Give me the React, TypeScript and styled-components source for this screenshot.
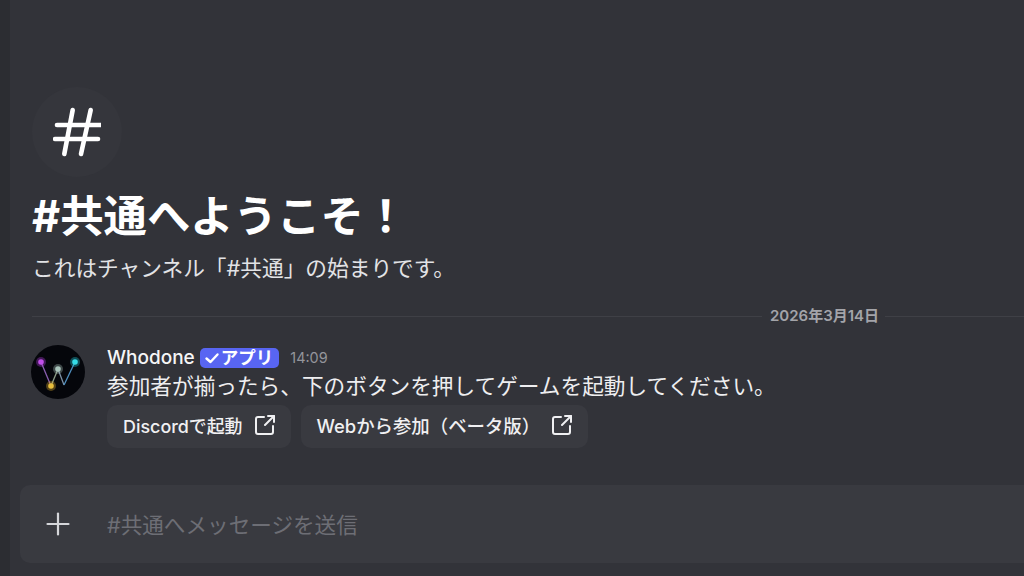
import React from "react";
import styled, { createGlobalStyle } from "styled-components";

const FONT = `Inter, "Noto Sans CJK JP", "Noto Sans", sans-serif`;

const Global = createGlobalStyle`
  html, body { margin: 0; padding: 0; background: #323339; }
  body { width: 1024px; height: 576px; overflow: hidden; font-family: ${FONT}; }
`;

const Page = styled.div`
  display: flex;
  width: 1024px;
  height: 576px;
  overflow: hidden;
  background: #323339;
`;
const Rail = styled.div`
  flex: 0 0 10px;
  background: #2c2d32;
`;
const Main = styled.main`
  flex: 1;
  min-width: 0;
  display: flex;
  flex-direction: column;
  padding: 87px 0 13px 10px;
`;
const Welcome = styled.section`
  display: flex;
  flex-direction: column;
  padding-left: 12px;
`;
const HashCircle = styled.div`
  width: 90px;
  height: 90px;
  border-radius: 50%;
  background: #35363c;
  display: flex;
  align-items: center;
  justify-content: center;
`;
const Title = styled.h1`
  margin: 11px 0 0;
  height: 56px;
  font-size: 43.400px;
  line-height: 56px;
  font-weight: 700;
  color: #ffffff;
  white-space: nowrap;
`;
const Subtitle = styled.p`
  margin: 10px 0 0;
  font-size: 21.700px;
  line-height: 28px;
  color: #e2e3e6;
  white-space: nowrap;
`;
const Divider = styled.div`
  display: flex;
  align-items: center;
  margin: 24px 0 0 12px;
  height: 20px;
`;
const DividerLine = styled.span<{ $w?: number }>`
  height: 1px;
  background: #3f4046;
  flex: ${(p) => (p.$w ? `0 0 ${p.$w}px` : "1")};
`;
const DateText = styled.span`
  padding: 0 6px 0 8px;
  font-size: 15px;
  line-height: 20px;
  font-weight: 600;
  color: #a3a4a9;
  white-space: nowrap;
`;
const Message = styled.article`
  display: flex;
  margin: 19px 0 0 11px;
`;
const Avatar = styled.div`
  flex: 0 0 54px;
  width: 54px;
  height: 54px;
  margin-right: 22px;
`;
const Body = styled.div`
  display: flex;
  flex-direction: column;
  min-width: 0;
`;
const Header = styled.div`
  display: flex;
  align-items: center;
  height: 26px;
`;
const Name = styled.span`
  font-size: 19px;
  line-height: 26px;
  font-weight: 500;
  color: #f6f6f7;
`;
const AppBadge = styled.span`
  display: inline-flex;
  align-items: center;
  gap: 1px;
  height: 20px;
  margin-left: 5px;
  padding: 0 6px 0 4px;
  border-radius: 5px;
  background: #5865f2;
  color: #ffffff;
  font-size: 17.500px;
  font-weight: 600;
  line-height: 20px;
`;
const Time = styled.span`
  margin-left: 11px;
  font-size: 14.400px;
  line-height: 20px;
  color: #94959b;
`;
const Text = styled.p`
  margin: 1px 0 0;
  font-size: 21.660px;
  line-height: 28px;
  color: #eeeef0;
  white-space: nowrap;
`;
const Actions = styled.div`
  display: flex;
  gap: 10px;
  margin-top: 5px;
`;
const ActionButton = styled.button<{ $size: number }>`
  display: flex;
  align-items: center;
  gap: 12px;
  height: 43px;
  padding: 0 16px 3px;
  border: 0;
  border-radius: 10px;
  background: #393a40;
  color: #f0f0f2;
  font-family: ${FONT};
  font-size: ${(p) => p.$size}px;
  font-weight: 500;
  white-space: nowrap;
`;
const Composer = styled.div`
  display: flex;
  align-items: center;
  margin-top: auto;
  width: 1030px;
  height: 78px;
  border-radius: 10px;
  background: #393a40;
`;
const PlusSlot = styled.div`
  flex: 0 0 76px;
  display: flex;
  justify-content: center;
`;
const Placeholder = styled.span`
  margin-left: 11px;
  padding-bottom: 2px;
  font-size: 21.600px;
  color: #6d6e75;
  white-space: nowrap;
`;

const Hash = () => (
  <svg width="48" height="50" viewBox="0 0 48 50" fill="none" stroke="#fff" strokeWidth="4.600" strokeLinecap="round">
    <path d="M19.700 3 L11.300 47" />
    <path d="M37.700 3 L28 47" />
    <path d="M4 18 H47" />
    <path d="M2 32 H45" />
  </svg>
);

const External = () => (
  <svg width="20" height="20" viewBox="1 1 20 20" fill="none" stroke="#f0f0f2" strokeWidth="2" strokeLinecap="round" strokeLinejoin="round">
    <path d="M10 3 H4 a2 2 0 0 0 -2 2 V18 a2 2 0 0 0 2 2 H17 a2 2 0 0 0 2 -2 V12" />
    <path d="M14 2 H20 V8" />
    <path d="M20 2 L11 11" />
  </svg>
);

const Check = () => (
  <svg width="16" height="16" viewBox="0 0 16 16" fill="none" stroke="#fff" strokeWidth="2.400" strokeLinecap="round" strokeLinejoin="round">
    <path d="M2.500 8.500 L6.500 12 L13.500 4.500" />
  </svg>
);

const Plus = () => (
  <svg width="24" height="24" viewBox="0 0 24 24" fill="none" stroke="#d5d6da" strokeWidth="2.200" strokeLinecap="round">
    <path d="M12 1.500 V22.500" />
    <path d="M1.500 12 H22.500" />
  </svg>
);

const Logo = () => (
  <svg width="54" height="54" viewBox="0 0 54 54">
    <circle cx="27" cy="27" r="27" fill="#05060b" />
    <path d="M10 17 L20 41" stroke="#8a5fb0" strokeWidth="1.300" fill="none" />
    <path d="M20 41 L27 24" stroke="#8fa08a" strokeWidth="1.300" fill="none" />
    <path d="M27 24 L33 40" stroke="#7f93a8" strokeWidth="1.300" fill="none" />
    <path d="M33 40 L44 17" stroke="#4f8fc0" strokeWidth="1.300" fill="none" />
    <circle cx="10" cy="17" r="5" fill="#b23fe0" opacity="0.35" />
    <circle cx="10" cy="17" r="2.800" fill="#c04fe8" />
    <circle cx="20" cy="41" r="5" fill="#e0b030" opacity="0.35" />
    <circle cx="20" cy="41" r="2.800" fill="#e6bd3d" />
    <circle cx="27" cy="24" r="5" fill="#a9c4bb" opacity="0.35" />
    <circle cx="27" cy="24" r="2.800" fill="#a9c4bb" />
    <circle cx="44" cy="17" r="5" fill="#25d0e0" opacity="0.35" />
    <circle cx="44" cy="17" r="2.800" fill="#35dbe6" />
  </svg>
);

export default function App() {
  return (
    <>
      <Global />
      <Page>
        <Rail />
        <Main>
          <Welcome>
            <HashCircle>
              <Hash />
            </HashCircle>
            <Title>#共通へようこそ！</Title>
            <Subtitle>これはチャンネル「#共通」の始まりです。</Subtitle>
          </Welcome>
          <Divider>
            <DividerLine $w={730} />
            <DateText>2026年3月14日</DateText>
            <DividerLine />
          </Divider>
          <Message>
            <Avatar>
              <Logo />
            </Avatar>
            <Body>
              <Header>
                <Name>Whodone</Name>
                <AppBadge>
                  <Check />
                  アプリ
                </AppBadge>
                <Time>14:09</Time>
              </Header>
              <Text>参加者が揃ったら、下のボタンを押してゲームを起動してください。</Text>
              <Actions>
                <ActionButton $size={17.9}>
                  Discordで起動
                  <External />
                </ActionButton>
                <ActionButton $size={18.4}>
                  Webから参加（ベータ版）
                  <External />
                </ActionButton>
              </Actions>
            </Body>
          </Message>
          <Composer>
            <PlusSlot>
              <Plus />
            </PlusSlot>
            <Placeholder>#共通へメッセージを送信</Placeholder>
          </Composer>
        </Main>
      </Page>
    </>
  );
}
